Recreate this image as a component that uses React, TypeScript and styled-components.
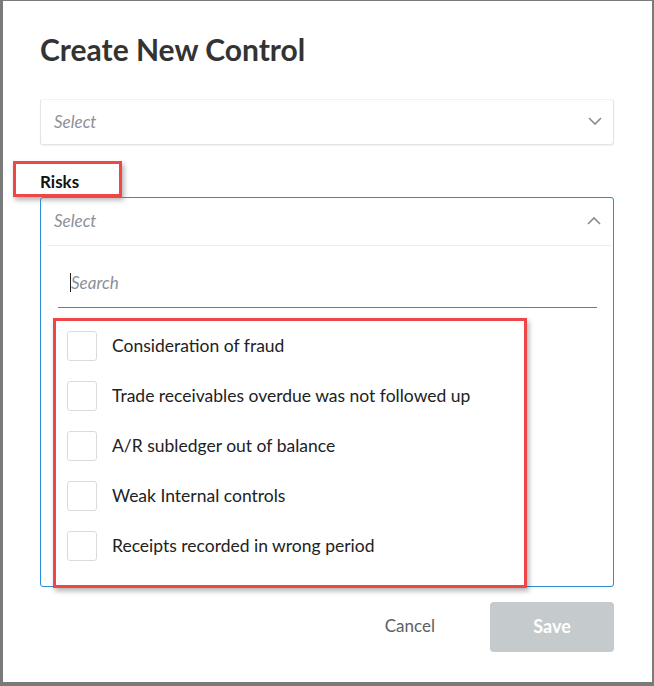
import styled, { createGlobalStyle } from 'styled-components';

const GlobalStyle = createGlobalStyle`
  html, body {
    margin: 0;
    padding: 0;
    overflow: hidden;
    background: #ffffff;
  }
  * {
    box-sizing: border-box;
  }
`;

const risks = [
  'Consideration of fraud',
  'Trade receivables overdue was not followed up',
  'A/R subledger out of balance',
  'Weak Internal controls',
  'Receipts recorded in wrong period',
];

function Chevron({ up }: { up?: boolean }) {
  return (
    <svg width="14" height="9" viewBox="0 0 14 9">
      <polyline
        points={up ? '1,8 7,2 13,8' : '1,1 7,7 13,1'}
        fill="none"
        stroke="#8c8c8c"
        strokeWidth="1.6"
      />
    </svg>
  );
}

function App() {
  return (
    <>
      <GlobalStyle />
      <Frame>
        <Title>Create New Control</Title>

        <SelectBox>
          <Placeholder>Select</Placeholder>
          <Chevron />
        </SelectBox>

        <LabelWrap>
          <FieldLabel>Risks</FieldLabel>
          <Highlight $left={-27} $top={-11} $width={109} $height={36} />
        </LabelWrap>

        <OpenSelect>
          <OpenHeader>
            <Placeholder>Select</Placeholder>
            <Chevron up />
          </OpenHeader>
          <SearchField>
            <Caret />
            <SearchText>Search</SearchText>
          </SearchField>
          <OptionList>
            {risks.map((risk) => (
              <OptionRow key={risk}>
                <CheckBox />
                <OptionLabel>{risk}</OptionLabel>
              </OptionRow>
            ))}
          </OptionList>
          <Highlight $left={12} $top={120} $width={474} $height={270} />
        </OpenSelect>

        <Footer>
          <CancelButton>Cancel</CancelButton>
          <SaveButton>Save</SaveButton>
        </Footer>
      </Frame>
    </>
  );
}

const Frame = styled.div`
  width: 654px;
  height: 686px;
  background: #ffffff;
  border-style: solid;
  border-color: #7a7a7a;
  border-width: 1px 2px 4px 3px;
  padding: 30px 38px 0 37px;
  font-family: Lato, 'Liberation Sans', sans-serif;
  display: flex;
  flex-direction: column;
`;

const Title = styled.h1`
  margin: 0;
  font-size: 30px;
  line-height: 36px;
  font-weight: 700;
  color: #333333;
`;

const SelectBox = styled.div`
  margin-top: 32px;
  height: 46px;
  border: 1px solid #e4e4e4;
  border-top-color: #f2f2f2;
  border-radius: 3px;
  box-shadow: 0 1px 2px rgba(0, 0, 0, 0.06);
  display: flex;
  align-items: center;
  justify-content: space-between;
  padding: 0 11px 2px 13px;
`;

const Placeholder = styled.span`
  font-size: 17px;
  font-style: italic;
  color: #8b9099;
`;

const LabelWrap = styled.div`
  position: relative;
  margin-top: 27px;
  align-self: flex-start;
`;

const FieldLabel = styled.div`
  font-size: 17px;
  line-height: 20px;
  font-weight: 700;
  color: #111111;
`;

const Highlight = styled.div<{ $left: number; $top: number; $width: number; $height: number }>`
  position: absolute;
  left: ${(p) => p.$left}px;
  top: ${(p) => p.$top}px;
  width: ${(p) => p.$width}px;
  height: ${(p) => p.$height}px;
  border: 3px solid #f04646;
  box-shadow: 2px 3px 5px rgba(0, 0, 0, 0.3);
  pointer-events: none;
`;

const OpenSelect = styled.div`
  position: relative;
  margin-top: 5px;
  height: 390px;
  border: 1px solid #2a8dd6;
  border-radius: 3px;
  display: flex;
  flex-direction: column;
`;

const OpenHeader = styled.div`
  height: 48px;
  margin: 0 2px 0 6px;
  padding: 0 10px 2px 7px;
  border-bottom: 1px solid #ececec;
  display: flex;
  align-items: center;
  justify-content: space-between;
`;

const SearchField = styled.div`
  margin: 16px 16px 0 17px;
  height: 46px;
  border-bottom: 1px solid #2a8dd6;
  display: flex;
  align-items: center;
  padding: 0 0 4px 12px;
`;

const Caret = styled.span`
  width: 1px;
  height: 19px;
  background: #222222;
`;

const SearchText = styled.span`
  font-size: 17px;
  font-style: italic;
  color: #8b9099;
`;

const OptionList = styled.div`
  margin-top: 23px;
  padding-left: 26px;
  display: flex;
  flex-direction: column;
  gap: 20px;
`;

const OptionRow = styled.div`
  display: flex;
  align-items: center;
  gap: 15px;
  height: 30px;
`;

const CheckBox = styled.span`
  width: 30px;
  height: 30px;
  border: 1px solid #d9dcdf;
  border-radius: 3px;
  background: #ffffff;
`;

const OptionLabel = styled.span`
  font-size: 17.5px;
  color: #222222;
  margin-bottom: 1px;
`;

const Footer = styled.div`
  margin-top: 15px;
  display: flex;
  justify-content: flex-end;
  align-items: center;
  gap: 55px;
`;

const CancelButton = styled.span`
  font-size: 17px;
  color: #5c6166;
  margin-bottom: 3px;
`;

const SaveButton = styled.div`
  width: 124px;
  height: 50px;
  border-radius: 4px;
  background: #c5cacd;
  color: #ffffff;
  font-size: 18px;
  font-weight: 700;
  display: flex;
  align-items: center;
  justify-content: center;
  padding-bottom: 2px;
`;

export default App;
